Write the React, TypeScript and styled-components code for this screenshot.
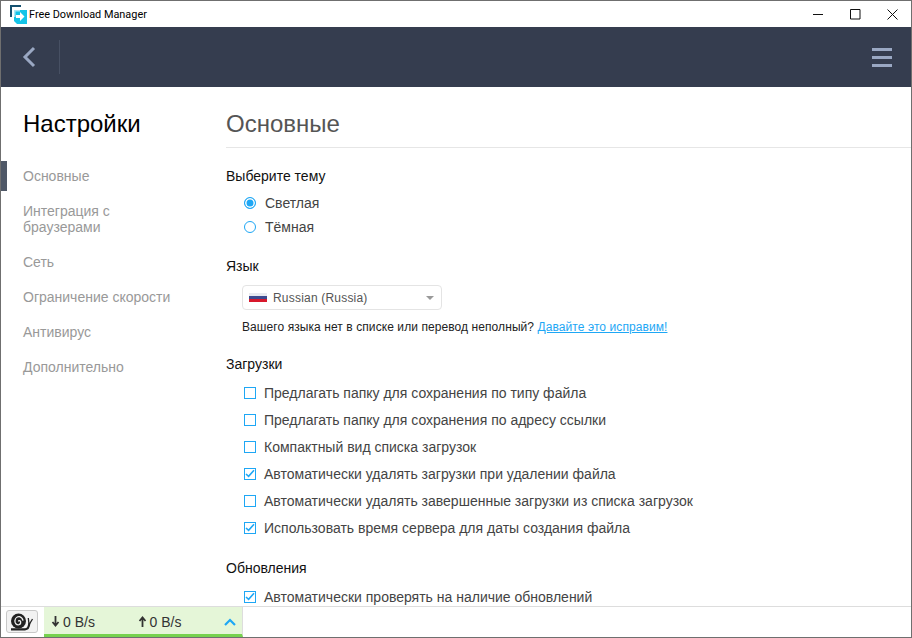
import { createGlobalStyle, styled } from "styled-components"

const GlobalStyle = createGlobalStyle`
    html, body {
        margin: 0;
        padding: 0;
        background: #fff;
    }
    * {
        box-sizing: border-box;
    }
`

const sideItems = [
    "Основные",
    "Интеграция с браузерами",
    "Сеть",
    "Ограничение скорости",
    "Антивирус",
    "Дополнительно",
]

const downloadOptions = [
    { label: "Предлагать папку для сохранения по типу файла", checked: false },
    { label: "Предлагать папку для сохранения по адресу ссылки", checked: false },
    { label: "Компактный вид списка загрузок", checked: false },
    { label: "Автоматически удалять загрузки при удалении файла", checked: true },
    { label: "Автоматически удалять завершенные загрузки из списка загрузок", checked: false },
    { label: "Использовать время сервера для даты создания файла", checked: true },
]

const Check = ({ checked, label }: { checked: boolean; label: string }) => (
    <CheckRow>
        <CheckBox>
            {checked &&
                <svg width="10" height="9" viewBox="0 0 10 9">
                    <path d="M1 5l2.600 2.400L9 1.200" fill="none" stroke="#1ea7f5" strokeWidth="1.600" />
                </svg>
            }
        </CheckBox>
        {label}
    </CheckRow>
)

const App = () => {
    return (
        <Window>
            <GlobalStyle />
            <TitleBar>
                <svg width="17" height="19" viewBox="0 0 17 19">
                    <path d="M1 12V1h10" fill="none" stroke="#14506f" strokeWidth="2" />
                    <path d="M4 5h13v14H7l-3-3z" fill="#14c4e8" />
                    <path d="M4 5h6v1.500H5.500V12H4z" fill="#a8e6f4" />
                    <path d="M6 10h4V7l4.500 4.500L10 16v-3H6z" fill="#fff" />
                </svg>
                <TitleText>Free Download Manager</TitleText>
                <WindowButtons>
                    <WindowButton>
                        <svg width="11" height="11" viewBox="0 0 11 11"><path d="M0 5.500h10" stroke="#111" /></svg>
                    </WindowButton>
                    <WindowButton>
                        <svg width="11" height="11" viewBox="0 0 11 11"><path d="M.5.500h9.500v9.500H.5z" fill="none" stroke="#111" /></svg>
                    </WindowButton>
                    <WindowButton>
                        <svg width="11" height="11" viewBox="0 0 11 11"><path d="M.5.500l10 10M10.500.500l-10 10" stroke="#111" /></svg>
                    </WindowButton>
                </WindowButtons>
            </TitleBar>
            <Header>
                <BackButton>
                    <svg width="14" height="22" viewBox="0 0 14 22">
                        <path d="M12 2L3 11l9 9" fill="none" stroke="#9aa8c3" strokeWidth="3" />
                    </svg>
                </BackButton>
                <Burger>
                    <BurgerLine />
                    <BurgerLine />
                    <BurgerLine />
                </Burger>
            </Header>
            <Body>
                <Sidebar>
                    <SideTitle>Настройки</SideTitle>
                    <SideList>
                        {sideItems.map((item, index) => (
                            <SideItem key={item} $active={index === 0}>{item}</SideItem>
                        ))}
                    </SideList>
                </Sidebar>
                <Content>
                    <PageTitle>Основные</PageTitle>
                    <SectionTitle>Выберите тему</SectionTitle>
                    <RadioList>
                        <RadioRow><RadioDot $on />Светлая</RadioRow>
                        <RadioRow><RadioDot />Тёмная</RadioRow>
                    </RadioList>
                    <SectionTitle $top={19}>Язык</SectionTitle>
                    <Select>
                        <Flag><FlagStripe $color="#e8eaf0" /><FlagStripe $color="#3d4a8f" /><FlagStripe $color="#d8182c" /></Flag>
                        Russian (Russia)
                        <Caret />
                    </Select>
                    <LangNote>
                        Вашего языка нет в списке или перевод неполный? <FixLink>Давайте это исправим!</FixLink>
                    </LangNote>
                    <SectionTitle $top={21}>Загрузки</SectionTitle>
                    <CheckList>
                        {downloadOptions.map(option => (
                            <Check key={option.label} {...option} />
                        ))}
                    </CheckList>
                    <SectionTitle $top={19}>Обновления</SectionTitle>
                    <CheckList>
                        <Check checked label="Автоматически проверять на наличие обновлений" />
                    </CheckList>
                </Content>
            </Body>
            <StatusBar>
                <SnailButton>
                    <svg width="24" height="18" viewBox="0 0 24 18">
                        <path d="M1 16.300h14c2.500 0 4-1.500 4.300-6" fill="none" stroke="#222" strokeWidth="2.200" />
                        <circle cx="8.500" cy="8" r="7.500" fill="#222" />
                        <path d="M8.500 8.500a1 1 0 0 1 1.500-.8 2.400 2.400 0 0 1-1 4A3.400 3.400 0 0 1 5 7.500 4.200 4.200 0 0 1 9.500 3.700a5 5 0 0 1 3.500 4" fill="none" stroke="#f2f2f2" strokeWidth="1.300" />
                        <path d="M19 11l-.7-6M19.500 11l3-5" stroke="#222" strokeWidth="1.300" />
                    </svg>
                </SnailButton>
                <SpeedPanel>
                    <SpeedItem>
                        <svg width="9" height="11" viewBox="0 0 9 11"><path d="M4.500 0v9M1.500 6l3 3.500 3-3.500" fill="none" stroke="#333" strokeWidth="1.800" /></svg>
                        0 B/s
                    </SpeedItem>
                    <SpeedItem>
                        <svg width="9" height="11" viewBox="0 0 9 11"><path d="M4.500 11V2M1.500 5l3-3.500 3 3.500" fill="none" stroke="#333" strokeWidth="1.800" /></svg>
                        0 B/s
                    </SpeedItem>
                    <svg width="12" height="8" viewBox="0 0 12 8"><path d="M1 7l5-5 5 5" fill="none" stroke="#1ea7f5" strokeWidth="2.200" /></svg>
                </SpeedPanel>
            </StatusBar>
        </Window>
    )
}

export default App

const Window = styled.div`
    width: 912px;
    height: 638px;
    display: flex;
    flex-direction: column;
    overflow: hidden;
    border: 1px solid #6f6f6f;
    background: #fff;
    font-family: "Liberation Sans", Arial, sans-serif;
    font-size: 14px;
`

const TitleBar = styled.div`
    height: 26px;
    flex: none;
    display: flex;
    align-items: center;
    padding-left: 9px;
    gap: 2px;
`

const TitleText = styled.span`
    font-family: Roboto, "Liberation Sans", sans-serif;
    font-size: 10.9px;
    color: #000;
`

const WindowButtons = styled.div`
    margin-left: auto;
    display: flex;
`

const WindowButton = styled.div`
    width: 37px;
    height: 26px;
    display: flex;
    align-items: center;
    justify-content: center;
`

const Header = styled.div`
    height: 60px;
    flex: none;
    display: flex;
    align-items: center;
    justify-content: space-between;
    background: #353d4f;
`

const BackButton = styled.div`
    width: 59px;
    height: 34px;
    display: flex;
    align-items: center;
    padding-left: 21px;
    border-right: 1px solid #475063;
`

const Burger = styled.div`
    display: flex;
    flex-direction: column;
    gap: 5px;
    margin-right: 19px;
`

const BurgerLine = styled.div`
    width: 20px;
    height: 3px;
    background: #9aa8c3;
`

const Body = styled.div`
    flex: 1;
    min-height: 0;
    display: flex;
    overflow: hidden;
`

const Sidebar = styled.div`
    width: 225px;
    flex: none;
`

const SideTitle = styled.div`
    padding: 22px 0 0 22px;
    height: 71px;
    font-size: 24px;
    line-height: 30px;
    color: #000;
`

const SideList = styled.div`
    display: flex;
    flex-direction: column;
`

const SideItem = styled.div<{ $active?: boolean }>`
    position: relative;
    width: 180px;
    padding: 10px 0 9px 22px;
    line-height: 16px;
    color: #999;

    &::before {
        content: "";
        display: ${props => (props.$active ? "block" : "none")};
        position: absolute;
        left: 0;
        top: 3px;
        width: 6px;
        height: 30px;
        background: #4f5867;
    }
`

const Content = styled.div`
    flex: 1;
    min-width: 0;
`

const PageTitle = styled.div`
    height: 61px;
    padding-top: 22px;
    font-size: 24px;
    line-height: 30px;
    color: #555;
    border-bottom: 1px solid #e6e6e6;
`

const SectionTitle = styled.div<{ $top?: number }>`
    margin-top: ${props => props.$top ?? 20}px;
    line-height: 16px;
    color: #111;
`

const RadioList = styled.div`
    margin-top: 7px;
    padding-left: 18px;
    display: flex;
    flex-direction: column;
`

const RadioRow = styled.div`
    height: 24px;
    display: flex;
    align-items: center;
    gap: 9px;
    color: #444;
`

const RadioDot = styled.span<{ $on?: boolean }>`
    width: 12px;
    height: 12px;
    border-radius: 50%;
    border: 1.5px solid #1ea7f5;
    background: ${props => (props.$on ? "#1ea7f5" : "#fff")};
    box-shadow: ${props => (props.$on ? "inset 0 0 0 1.5px #fff" : "none")};
`

const Select = styled.div`
    margin: 11px 0 0 16px;
    width: 200px;
    height: 25px;
    position: relative;
    display: flex;
    align-items: center;
    gap: 6px;
    padding-left: 6px;
    border: 1px solid #e4e4e4;
    border-radius: 4px;
    font-size: 12px;
    letter-spacing: 0.2px;
    color: #555;
`

const Flag = styled.span`
    width: 18px;
    height: 10px;
    display: flex;
    flex-direction: column;
`

const FlagStripe = styled.span<{ $color: string }>`
    flex: 1;
    background: ${props => props.$color};
`

const Caret = styled.span`
    position: absolute;
    right: 7px;
    top: 10px;
    border-style: solid;
    border-width: 4px 4px 0;
    border-color: #999 transparent transparent;
`

const LangNote = styled.div`
    margin: 10px 0 0 16px;
    font-size: 12px;
    line-height: 15px;
    letter-spacing: 0.08px;
    color: #222;
`

const FixLink = styled.span`
    color: #1ea7f5;
    text-decoration: underline;
`

const CheckList = styled.div`
    margin-top: 7px;
    padding-left: 18px;
    display: flex;
    flex-direction: column;
`

const CheckRow = styled.div`
    height: 27px;
    display: flex;
    align-items: center;
    gap: 8px;
    color: #444;
    white-space: nowrap;
`

const CheckBox = styled.span`
    width: 12px;
    height: 12px;
    flex: none;
    display: flex;
    align-items: center;
    justify-content: center;
    border: 1px solid #1ea7f5;
`

const StatusBar = styled.div`
    height: 31px;
    flex: none;
    display: flex;
    border-top: 1px solid #ddd;
`

const SnailButton = styled.div`
    width: 32px;
    height: 23px;
    margin: 3px 6px 0 5px;
    display: flex;
    align-items: center;
    justify-content: center;
    border: 1px solid #c8c8c8;
    border-radius: 3px;
    background: #f2f2f2;
`

const SpeedPanel = styled.div`
    width: 199px;
    display: flex;
    align-items: center;
    padding: 2px 6px 0 7px;
    background: #e5f6d8;
    border-bottom: 3px solid #76d24e;
    border-right: 1px solid #ddd;
    font-size: 14px;
    color: #333;
    justify-content: space-between;
`

const SpeedItem = styled.div`
    display: flex;
    align-items: center;
    gap: 3px;
    width: 80px;
`
